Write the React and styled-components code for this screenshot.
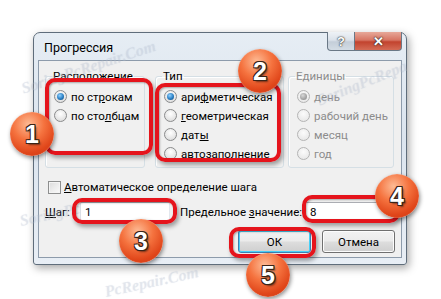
import React from 'react'
import styled, { createGlobalStyle } from 'styled-components'

const GlobalStyle = createGlobalStyle`
  html, body { margin: 0; padding: 0; background: #fff; }
  body {
    font-family: Roboto, "Noto Sans", sans-serif;
    font-size: 11.5px;
    color: #000;
  }
`

const Page = styled.div`
  position: relative;
  width: 441px;
  height: 299px;
  box-sizing: border-box;
  padding: 32px 0 0 33px;
  overflow: hidden;
  background: #fff;
`

const Window = styled.div`
  width: 374px;
  height: 233px;
  box-sizing: border-box;
  display: flex;
  flex-direction: column;
  padding: 0 4px 6px 4px;
  border: 1px solid #5f6d7b;
  border-radius: 7px 7px 3px 3px;
  background: linear-gradient(#e6edf4, #dbe4ee 45%, #e8eef5);
  box-shadow: 2px 3px 9px rgba(0, 0, 0, 0.35);
`

const TitleBar = styled.div`
  height: 27px;
  display: flex;
  justify-content: space-between;
  align-items: flex-start;
`

const Title = styled.span`
  padding: 7px 0 0 6px;
  font-size: 12.5px;
  line-height: 16px;
`

const Caption = styled.div`
  display: flex;
  margin-top: -1px;
`

const CaptionButton = styled.div`
  width: ${p => p.$w}px;
  height: 19px;
  box-sizing: border-box;
  display: flex;
  align-items: center;
  justify-content: center;
  border: 1px solid #6a7886;
  border-top: none;
  color: #fff;
  font: bold 13px "Liberation Sans", sans-serif;
  text-shadow: 0 0 1px #222, 0 0 2px #222;
  background: ${p => p.$close
    ? 'linear-gradient(#e7a899, #d77563 45%, #c2432e 55%, #d46b55)'
    : 'linear-gradient(#eef2f6, #dbe2ea 45%, #c4ced9 55%, #d3dce5)'};
  border-radius: ${p => (p.$close ? '0 0 4px 0' : '0 0 0 4px')};
  border-left: ${p => (p.$close ? 'none' : '1px solid #6a7886')};
`

const Client = styled.div`
  flex: 1;
  display: flex;
  flex-direction: column;
  border: 1px solid #8d9bab;
  background: #f0f0f0;
  padding-top: 7px;
`

const GroupRow = styled.div`
  display: flex;
  padding-left: 6px;
`

const GroupBox = styled.fieldset`
  width: ${p => p.$w}px;
  height: 100px;
  box-sizing: border-box;
  margin: 0 ${p => p.$gap}px 0 0;
  padding: 3px 0 0 8px;
  min-width: 0;
  border: 1px solid #d5dfe5;
  border-radius: 3px;
  box-shadow: inset 1px 1px 0 #fff;
  display: flex;
  flex-direction: column;
`

const Legend = styled.legend`
  padding: 0 1px;
  margin-left: -2px;
  line-height: 16px;
  color: ${p => (p.$disabled ? '#8c8c8c' : '#000')};
`

const Option = styled.label`
  height: 19px;
  display: flex;
  align-items: center;
  gap: 4px;
  color: ${p => (p.$disabled ? '#8c8c8c' : '#000')};
  white-space: nowrap;
`

const Radio = styled.span`
  width: 13px;
  height: 13px;
  box-sizing: border-box;
  flex: none;
  border-radius: 50%;
  border: 1px solid ${p => (p.$disabled ? '#b4b4b4' : '#8a8b8c')};
  display: flex;
  align-items: center;
  justify-content: center;
  background: ${p => p.$disabled
    ? 'radial-gradient(circle at 50% 35%, #fbfbfb, #e3e3e3)'
    : 'radial-gradient(circle at 50% 35%, #ffffff, #d6d6d6)'};

  &::after {
    content: '';
    display: ${p => (p.$checked ? 'block' : 'none')};
    width: 7px;
    height: 7px;
    border-radius: 50%;
    background: ${p => p.$disabled
      ? 'radial-gradient(circle at 40% 35%, #d8d8d8, #9a9a9a 70%, #8a8a8a)'
      : 'radial-gradient(circle at 40% 35%, #8fd0ff, #2a7fc4 55%, #0f3f6a)'};
  }
`

const CheckRow = styled.label`
  display: flex;
  align-items: center;
  gap: 3px;
  height: 16px;
  margin-top: 11px;
  padding-left: 9px;
`

const CheckBox = styled.span`
  width: 13px;
  height: 13px;
  box-sizing: border-box;
  border: 1px solid #8e8f8f;
  background: linear-gradient(135deg, #dcdcdc, #fbfbfb);
  box-shadow: inset 0 0 0 1px #f4f4f4;
`

const FieldRow = styled.div`
  display: flex;
  align-items: center;
  height: 20px;
  margin-top: 7px;
  padding-left: 6px;
`

const FieldLabel = styled.span`
  width: ${p => p.$w}px;
  margin-left: ${p => p.$ml || 0}px;
  white-space: nowrap;
`

const Input = styled.div`
  width: 90px;
  height: 20px;
  box-sizing: border-box;
  padding-left: 4px;
  display: flex;
  align-items: center;
  background: #fff;
  border: 1px solid #e2e7ee;
  border-top-color: #abadb3;
  border-left-color: #dbdfe6;
`

const ButtonRow = styled.div`
  display: flex;
  justify-content: flex-end;
  gap: 11px;
  margin-top: 8px;
  padding-right: 6px;
`

const Button = styled.div`
  width: 73px;
  height: 23px;
  box-sizing: border-box;
  display: flex;
  align-items: center;
  justify-content: center;
  border-radius: 3px;
  border: 1px solid ${p => (p.$default ? '#3c7fb1' : '#707070')};
  background: linear-gradient(#f2f2f2, #ebebeb 48%, #dddddd 52%, #cfcfcf);
  box-shadow: ${p => (p.$default ? 'inset 0 0 0 1px #48d0f8' : 'inset 0 0 0 1px #fcfcfc')};
`

const RedFrame = styled.div`
  position: absolute;
  left: ${p => p.$x}px;
  top: ${p => p.$y}px;
  width: ${p => p.$w}px;
  height: ${p => p.$h}px;
  box-sizing: border-box;
  border: 4px solid #e5141c;
  border-radius: 10px;
  box-shadow: 2px 3px 4px rgba(0, 0, 0, 0.35), inset 1px 1px 2px rgba(0, 0, 0, 0.3);
`

const Badge = styled.div`
  position: absolute;
  left: ${p => p.$x - 22}px;
  top: ${p => p.$y - 22}px;
  width: 44px;
  height: 44px;
  border-radius: 50%;
  display: flex;
  align-items: center;
  justify-content: center;
  background: radial-gradient(circle at 42% 28%, #fdbb95 0%, #f5733f 38%, #e0461a 70%, #c9330f 100%);
  box-shadow: 1px 2px 4px rgba(0, 0, 0, 0.45), inset 0 0 1px rgba(255, 255, 255, 0.6);
  color: #fff;
  font: bold 25px "Liberation Sans", sans-serif;
  text-shadow:
    1px 1px 0 #3a2418, -1px -1px 0 #3a2418, 1px -1px 0 #3a2418, -1px 1px 0 #3a2418,
    0 1px 0 #3a2418, 1px 0 0 #3a2418, 2px 2px 2px rgba(0, 0, 0, 0.5);
`

const Watermark = styled.span`
  position: absolute;
  left: ${p => p.$x}px;
  top: ${p => p.$y}px;
  transform: rotate(${p => p.$r}deg);
  transform-origin: left center;
  font: italic bold 16px "Liberation Serif", serif;
  color: rgba(200, 208, 222, 0.22);
  text-shadow: 0 0 1px rgba(140, 155, 180, 0.2);
  white-space: nowrap;
  pointer-events: none;
`

export default function App() {
  return (
    <>
      <GlobalStyle />
      <Page>
        <Window>
          <TitleBar>
            <Title>Прогрессия</Title>
            <Caption>
              <CaptionButton $w={28}>?</CaptionButton>
              <CaptionButton $w={47} $close>✕</CaptionButton>
            </Caption>
          </TitleBar>
          <Client>
            <GroupRow>
              <GroupBox $w={100} $gap={10}>
                <Legend>Расположение</Legend>
                <Option><Radio $checked /><span>по ст<u>р</u>окам</span></Option>
                <Option><Radio /><span>по сто<u>л</u>бцам</span></Option>
              </GroupBox>
              <GroupBox $w={129} $gap={4}>
                <Legend>Тип</Legend>
                <Option><Radio $checked /><span>ари<u>ф</u>метическая</span></Option>
                <Option><Radio /><span><u>г</u>еометрическая</span></Option>
                <Option><Radio /><span>дат<u>ы</u></span></Option>
                <Option><Radio /><span>а<u>в</u>тозаполнение</span></Option>
              </GroupBox>
              <GroupBox $w={106} $gap={0}>
                <Legend $disabled>Единицы</Legend>
                <Option $disabled><Radio $checked $disabled /><span>день</span></Option>
                <Option $disabled><Radio $disabled /><span>рабочий день</span></Option>
                <Option $disabled><Radio $disabled /><span>месяц</span></Option>
                <Option $disabled><Radio $disabled /><span>год</span></Option>
              </GroupBox>
            </GroupRow>
            <CheckRow><CheckBox /><span><u>А</u>втоматическое определение шага</span></CheckRow>
            <FieldRow>
              <FieldLabel $w={35}><u>Ш</u>аг:</FieldLabel>
              <Input>1</Input>
              <FieldLabel $w={125} $ml={10}>Предельное <u>з</u>начение:</FieldLabel>
              <Input>8</Input>
            </FieldRow>
            <ButtonRow>
              <Button $default>ОК</Button>
              <Button>Отмена</Button>
            </ButtonRow>
          </Client>
        </Window>

        <Watermark $x={22} $y={80} $r={-18}>SoringPcRepair.Com</Watermark>
        <Watermark $x={318} $y={92} $r={-22}>SoringPcRepa</Watermark>
        <Watermark $x={20} $y={212} $r={-12}>SoringPc</Watermark>
        <Watermark $x={105} $y={283} $r={-12}>PcRepair.Com</Watermark>

        <RedFrame $x={45} $y={78} $w={108} $h={77} />
        <RedFrame $x={155} $y={83} $w={126} $h={79} />
        <RedFrame $x={72} $y={198} $w={105} $h={26} />
        <RedFrame $x={302} $y={195} $w={98} $h={28} />
        <RedFrame $x={229} $y={227} $w={87} $h={31} />

        <Badge $x={32} $y={134}>1</Badge>
        <Badge $x={260} $y={71}>2</Badge>
        <Badge $x={141} $y={241}>3</Badge>
        <Badge $x={397} $y={196}>4</Badge>
        <Badge $x={268} $y={275}>5</Badge>
      </Page>
    </>
  )
}
